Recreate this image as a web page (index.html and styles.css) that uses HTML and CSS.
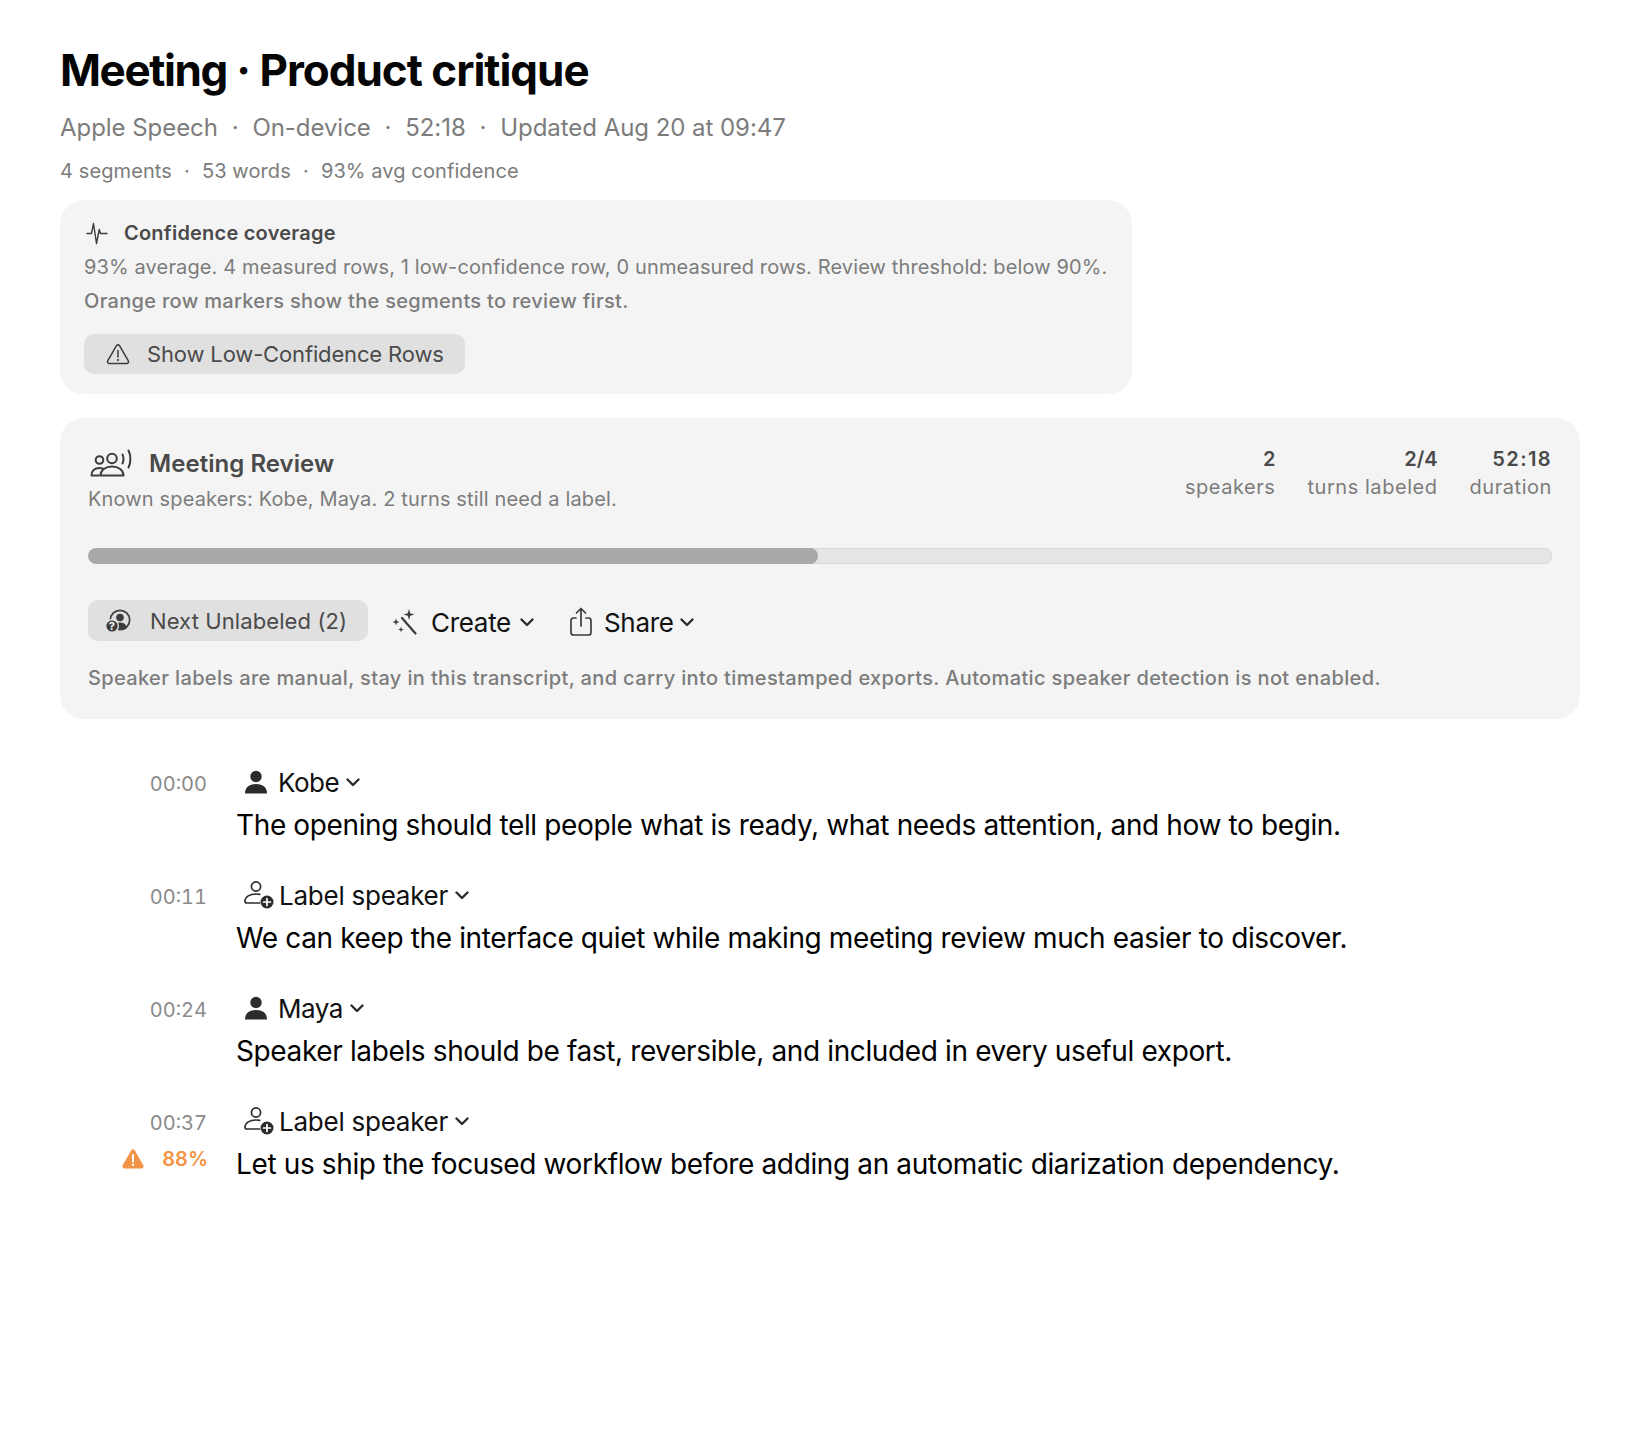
FILE: index.html
```html
<!DOCTYPE html>
<html lang="en">
<head>
<meta charset="utf-8">
<title>Meeting · Product critique</title>
<link rel="stylesheet" href="styles.css">
</head>
<body>
<main class="page">
  <h1 class="title"><span class="title-lead">Meeting</span> · Product critique</h1>
  <p class="meta"><span>Apple Speech</span><i>·</i><span>On-device</span><i>·</i><span>52:18</span><i>·</i><span>Updated Aug 20 at 09:47</span></p>
  <p class="stats-line"><span>4 segments</span><i>·</i><span>53 words</span><i>·</i><span>93% avg confidence</span></p>

  <section class="card coverage">
    <div class="coverage-head">
      <svg class="ic-pulse" viewBox="0 0 22 24" fill="none" stroke="#3c3c3c" stroke-width="1.4" stroke-linecap="round" stroke-linejoin="round"><path d="M1 12.500h4.500l2-10 3 20 2.700-14 1.300 4h6.500"/></svg>
      <h2>Confidence coverage</h2>
    </div>
    <p class="coverage-text">93% average. 4 measured rows, 1 low-confidence row, 0 unmeasured rows. Review threshold: below 90%.</p>
    <p class="coverage-text strong">Orange row markers show the segments to review first.</p>
    <button class="pill pill-low">
      <svg class="ic-warn" viewBox="0 0 24 22" fill="none" stroke="#3c3c3c" stroke-width="1.5" stroke-linejoin="round"><path d="M10.500 2.600 1.700 17.800c-.7 1.200.2 2.700 1.600 2.700h17.400c1.400 0 2.300-1.500 1.600-2.700L13.500 2.600c-.7-1.200-2.300-1.200-3 0z"/><path d="M12 7.500v6.500" stroke-linecap="round"/><circle cx="12" cy="17" r=".7" fill="#3c3c3c" stroke-width="1"/></svg>
      <span>Show Low-Confidence Rows</span>
    </button>
  </section>

  <section class="card review">
    <header class="review-head">
      <div class="review-intro">
        <div class="review-title">
          <svg class="ic-group" viewBox="0 0 44 28" fill="none" stroke="#3c3c3c" stroke-width="2" stroke-linecap="round" stroke-linejoin="round"><circle cx="9.500" cy="11" r="3.800"/><circle cx="22" cy="9.500" r="4.800"/><path d="M12.700 19.500c-1-.3-2-.5-3.200-.5-5 0-8 3-8 7.500h7.500"/><path d="M10.500 26.500c0-5.500 5-9 11.500-9s11.500 3.500 11.500 9z"/><path d="M32.500 5.500c1.300 2.200 1.300 6.800 0 9"/><path d="M38.500 1.500c2.500 4.500 2.500 12.500 0 17"/></svg>
          <h2>Meeting Review</h2>
        </div>
        <p class="review-sub">Known speakers: Kobe, Maya. 2 turns still need a label.</p>
      </div>
      <dl class="review-stats">
        <div class="stat"><dd>2</dd><dt>speakers</dt></div>
        <div class="stat"><dd>2/4</dd><dt>turns labeled</dt></div>
        <div class="stat"><dd class="stat-time">52:18</dd><dt>duration</dt></div>
      </dl>
    </header>
    <div class="progress"><div class="progress-fill"></div></div>
    <div class="actions">
      <button class="pill pill-next">
        <svg class="ic-next" viewBox="0 0 26 24"><circle cx="15" cy="11" r="9.700" fill="none" stroke="#3c3c3c" stroke-width="1.700"/><circle cx="15" cy="8.500" r="3.800" fill="#3c3c3c"/><path d="M8 19c.8-3.700 3.500-5.500 7-5.500s6.200 1.800 7 5.500c-2 1.500-4.500 2-7 2s-5-.5-7-2z" fill="#3c3c3c"/><circle cx="7" cy="17" r="6.300" fill="#3c3c3c" stroke="#e0e0e0" stroke-width="1.400"/><text x="7" y="20.800" text-anchor="middle" class="ic-q">?</text></svg>
        <span>Next Unlabeled (2)</span>
      </button>
      <button class="menu menu-create">
        <svg class="ic-wand" viewBox="0 0 26 26" fill="none"><path d="M10 9 23.500 24.500" stroke="#3c3c3c" stroke-width="2.200" stroke-linecap="round"/><path d="M17 0l1.200 4.300 4.300 1.200-4.300 1.200L17 11l-1.200-4.300-4.300-1.200 4.300-1.200z" fill="#3c3c3c"/><path d="M4 9.500l.9 2.600 2.600.9-2.600.9-.9 2.600-.9-2.600-2.600-.9 2.600-.9z" fill="#3c3c3c"/><path d="M9 17.500l.7 2.300 2.300.7-2.300.7-.7 2.300-.7-2.300-2.300-.7 2.300-.7z" fill="#3c3c3c"/></svg>
        <span>Create</span>
        <svg class="chev" viewBox="0 0 14 9" fill="none" stroke="#2c2c2c" stroke-width="2.400" stroke-linecap="round" stroke-linejoin="round"><path d="M1.500 1.500 7 7l5.500-5.500"/></svg>
      </button>
      <button class="menu menu-share">
        <svg class="ic-share" viewBox="0 0 24 30" fill="none" stroke="#3c3c3c" stroke-width="1.700" stroke-linecap="round" stroke-linejoin="round"><path d="M7 11H4.500C3 11 2 12 2 13.500v12C2 27 3 28 4.500 28h15c1.500 0 2.500-1 2.500-2.500v-12C22 12 21 11 19.500 11H17"/><path d="M12 19V2M7.500 6 12 1.500 16.500 6"/></svg>
        <span>Share</span>
        <svg class="chev" viewBox="0 0 14 9" fill="none" stroke="#2c2c2c" stroke-width="2.400" stroke-linecap="round" stroke-linejoin="round"><path d="M1.500 1.500 7 7l5.500-5.500"/></svg>
      </button>
    </div>
    <p class="review-note">Speaker labels are manual, stay in this transcript, and carry into timestamped exports. Automatic speaker detection is not enabled.</p>
  </section>

  <section class="transcript">
    <article class="turn">
      <time class="time">00:00</time>
      <button class="speaker named"><span class="sp-ic"><svg class="ic-person" viewBox="0 0 24 24"><circle cx="12" cy="6.500" r="5.700" fill="#2c2c2c"/><path d="M1 23.500c0-6 4-9.500 11-9.500s11 3.500 11 9.500z" fill="#2c2c2c"/></svg></span><span>Kobe</span><svg class="chev" viewBox="0 0 14 9" fill="none" stroke="#2c2c2c" stroke-width="2.400" stroke-linecap="round" stroke-linejoin="round"><path d="M1.500 1.500 7 7l5.500-5.500"/></svg></button>
      <span class="conf"></span>
      <p class="text">The opening should tell people what is ready, what needs attention, and how to begin.</p>
    </article>
    <article class="turn">
      <time class="time">00:11</time>
      <button class="speaker unnamed"><span class="sp-ic"><svg class="ic-add" viewBox="0 0 30 28"><circle cx="12" cy="5.500" r="4.600" fill="none" stroke="#2c2c2c" stroke-width="1.700"/><path d="M15.500 22H3c-1.300 0-2-.7-2-1.700C1 15.500 6 13 12 13c1.300 0 2.500.1 3.700.4" fill="none" stroke="#2c2c2c" stroke-width="1.700" stroke-linecap="round"/><circle cx="23" cy="21" r="6.500" fill="#2c2c2c"/><path d="M23 17.500v7M19.500 21h7" stroke="#fff" stroke-width="1.700" stroke-linecap="round"/></svg></span><span>Label speaker</span><svg class="chev" viewBox="0 0 14 9" fill="none" stroke="#2c2c2c" stroke-width="2.400" stroke-linecap="round" stroke-linejoin="round"><path d="M1.500 1.500 7 7l5.500-5.500"/></svg></button>
      <span class="conf"></span>
      <p class="text">We can keep the interface quiet while making meeting review much easier to discover.</p>
    </article>
    <article class="turn">
      <time class="time">00:24</time>
      <button class="speaker named"><span class="sp-ic"><svg class="ic-person" viewBox="0 0 24 24"><circle cx="12" cy="6.500" r="5.700" fill="#2c2c2c"/><path d="M1 23.500c0-6 4-9.500 11-9.500s11 3.500 11 9.500z" fill="#2c2c2c"/></svg></span><span>Maya</span><svg class="chev" viewBox="0 0 14 9" fill="none" stroke="#2c2c2c" stroke-width="2.400" stroke-linecap="round" stroke-linejoin="round"><path d="M1.500 1.500 7 7l5.500-5.500"/></svg></button>
      <span class="conf"></span>
      <p class="text">Speaker labels should be fast, reversible, and included in every useful export.</p>
    </article>
    <article class="turn">
      <time class="time">00:37</time>
      <button class="speaker unnamed"><span class="sp-ic"><svg class="ic-add" viewBox="0 0 30 28"><circle cx="12" cy="5.500" r="4.600" fill="none" stroke="#2c2c2c" stroke-width="1.700"/><path d="M15.500 22H3c-1.300 0-2-.7-2-1.700C1 15.500 6 13 12 13c1.300 0 2.500.1 3.700.4" fill="none" stroke="#2c2c2c" stroke-width="1.700" stroke-linecap="round"/><circle cx="23" cy="21" r="6.500" fill="#2c2c2c"/><path d="M23 17.500v7M19.500 21h7" stroke="#fff" stroke-width="1.700" stroke-linecap="round"/></svg></span><span>Label speaker</span><svg class="chev" viewBox="0 0 14 9" fill="none" stroke="#2c2c2c" stroke-width="2.400" stroke-linecap="round" stroke-linejoin="round"><path d="M1.500 1.500 7 7l5.500-5.500"/></svg></button>
      <span class="conf"><svg class="ic-flag" viewBox="0 0 22 20"><path d="M9.300 1.300 .7 16.300c-.8 1.400.2 3.200 1.800 3.200h17c1.600 0 2.600-1.800 1.800-3.200L12.700 1.300c-.8-1.300-2.600-1.300-3.400 0z" fill="#f29445"/><path d="M11 6v6.500" stroke="#fff" stroke-width="2" stroke-linecap="round"/><circle cx="11" cy="15.800" r="1.200" fill="#fff"/></svg><b>88%</b></span>
      <p class="text">Let us ship the focused workflow before adding an automatic diarization dependency.</p>
    </article>
  </section>
</main>
</body>
</html>
```
FILE: styles.css
```css
* { box-sizing: border-box; }
html, body { margin: 0; background: #fff; }
body { font-family: Inter, "Liberation Sans", sans-serif; color: #000; }
h1, h2, p, dl, dd, dt { margin: 0; }
button { font: inherit; color: inherit; border: 0; background: none; padding: 0; display: flex; align-items: center; }

.page { padding: 43px 60px 0; }
.title { font-size: 44px; line-height: 54px; font-weight: 700; letter-spacing: -1px; color: #050505; }
.title-lead { letter-spacing: -1.4px; }
.meta { margin-top: 15px; font-size: 24px; line-height: 32px; color: #7c7c7c; display: flex; letter-spacing: -0.05px; }
.meta i { font-style: normal; width: 34.5px; text-align: center; }
.stats-line { margin-top: 13px; font-size: 20px; line-height: 28px; color: #7c7c7c; display: flex; letter-spacing: 0.1px; }
.stats-line i { font-style: normal; width: 30px; text-align: center; }

.card { background: #f4f4f4; border-radius: 24px; }
.coverage { margin-top: 15px; width: 1072px; padding: 20px 24px 20px; }
.coverage-head { display: flex; align-items: center; gap: 16px; height: 26px; padding-left: 2px; }
.coverage-head h2 { font-size: 20px; font-weight: 600; color: #4a4a4a; line-height: 26px; letter-spacing: 0.22px; }
.ic-pulse { width: 22px; height: 24px; }
.coverage-text { margin-top: 9px; font-size: 20px; line-height: 25px; color: #7c7c7c; white-space: nowrap; letter-spacing: 0.13px; }
.coverage-text.strong { font-weight: 500; letter-spacing: 0.3px; }
.pill { background: #e0e0e0; border-radius: 10px; height: 40px; }
.pill-low { margin-top: 20px; width: 381px; padding-left: 22px; gap: 17px; font-size: 22px; color: #4a4a4a; letter-spacing: -0.15px; }
.ic-warn { width: 24px; height: 22px; }

.review { margin-top: 24px; height: 301px; padding: 27px 28px 0; }
.review-head { display: flex; justify-content: space-between; height: 70px; }
.review-intro { padding-top: 2px; }
.review-title { display: flex; align-items: center; gap: 15px; height: 32px; }
.review-title h2 { font-size: 24px; font-weight: 600; color: #4a4a4a; letter-spacing: 0.05px; }
.ic-group { width: 44px; height: 28px; margin-left: 2px; }
.review-sub { margin-top: 6px; font-size: 20px; line-height: 28px; color: #7c7c7c; letter-spacing: 0.15px; }
.review-stats { display: flex; gap: 32px; text-align: right; }
.stat dd { font-size: 20px; line-height: 28px; font-weight: 600; color: #4a4a4a; }
.stat-time { letter-spacing: 1.4px; }
.stat dt { font-size: 20px; line-height: 28px; color: #7c7c7c; letter-spacing: 0.55px; }
.progress { margin-top: 33px; height: 16px; border-radius: 8px; background: #e5e5e5; box-shadow: inset 0 0 0 1px #d9d9d9; overflow: hidden; }
.progress-fill { width: 49.85%; height: 100%; background: #a8a8a8; border-radius: 8px; }
.actions { margin-top: 36px; display: flex; align-items: center; height: 41px; }
.pill-next { height: 41px; width: 280px; padding-left: 17px; gap: 19px; font-size: 22px; color: #4a4a4a; letter-spacing: 0.1px; }
.ic-next { width: 26px; height: 24px; }
.ic-q { font-size: 11px; font-weight: 700; fill: #fff; font-family: Inter, sans-serif; }
.menu { font-size: 26px; color: #111; letter-spacing: -0.3px; padding-top: 3px; }
.menu-create { margin-left: 24px; }
.ic-wand { width: 26px; height: 26px; margin-right: 13px; }
.menu-create .chev { margin-left: 9px; }
.menu-share { margin-left: 35px; }
.ic-share { width: 24px; height: 30px; margin-right: 11px; }
.menu-share .chev { margin-left: 6px; }
.chev { width: 14px; height: 9px; }
.review-note { margin-top: 23px; font-size: 20px; line-height: 28px; color: #7c7c7c; white-space: nowrap; font-weight: 500; letter-spacing: 0.36px; }

.transcript { margin-top: 44px; }
.turn { display: grid; grid-template-columns: 147px 1fr; column-gap: 29px; grid-template-rows: 40px 45px; margin-bottom: 28px; }
.time { font-size: 20px; line-height: 42px; color: #8a8a8a; text-align: right; font-variant-numeric: tabular-nums; }
.speaker { font-size: 26px; color: #111; padding-left: 8px; height: 38px; letter-spacing: -0.25px; }
.speaker.named { letter-spacing: -0.5px; }
.speaker.unnamed .sp-ic { width: 35px; }
.sp-ic { width: 34px; display: flex; }
.ic-person { width: 24px; height: 24px; }
.ic-add { width: 30px; height: 28px; }
.speaker .chev { margin-left: 7px; }
.conf { display: flex; align-items: center; justify-content: flex-end; gap: 18px; height: 34px; color: #f29445; font-size: 20px; margin-right: -1px; }
.conf b { font-weight: 600; }
.ic-flag { width: 22px; height: 20px; }
.text { font-size: 28px; line-height: 45px; color: #000; white-space: nowrap; letter-spacing: -0.37px; }
```
